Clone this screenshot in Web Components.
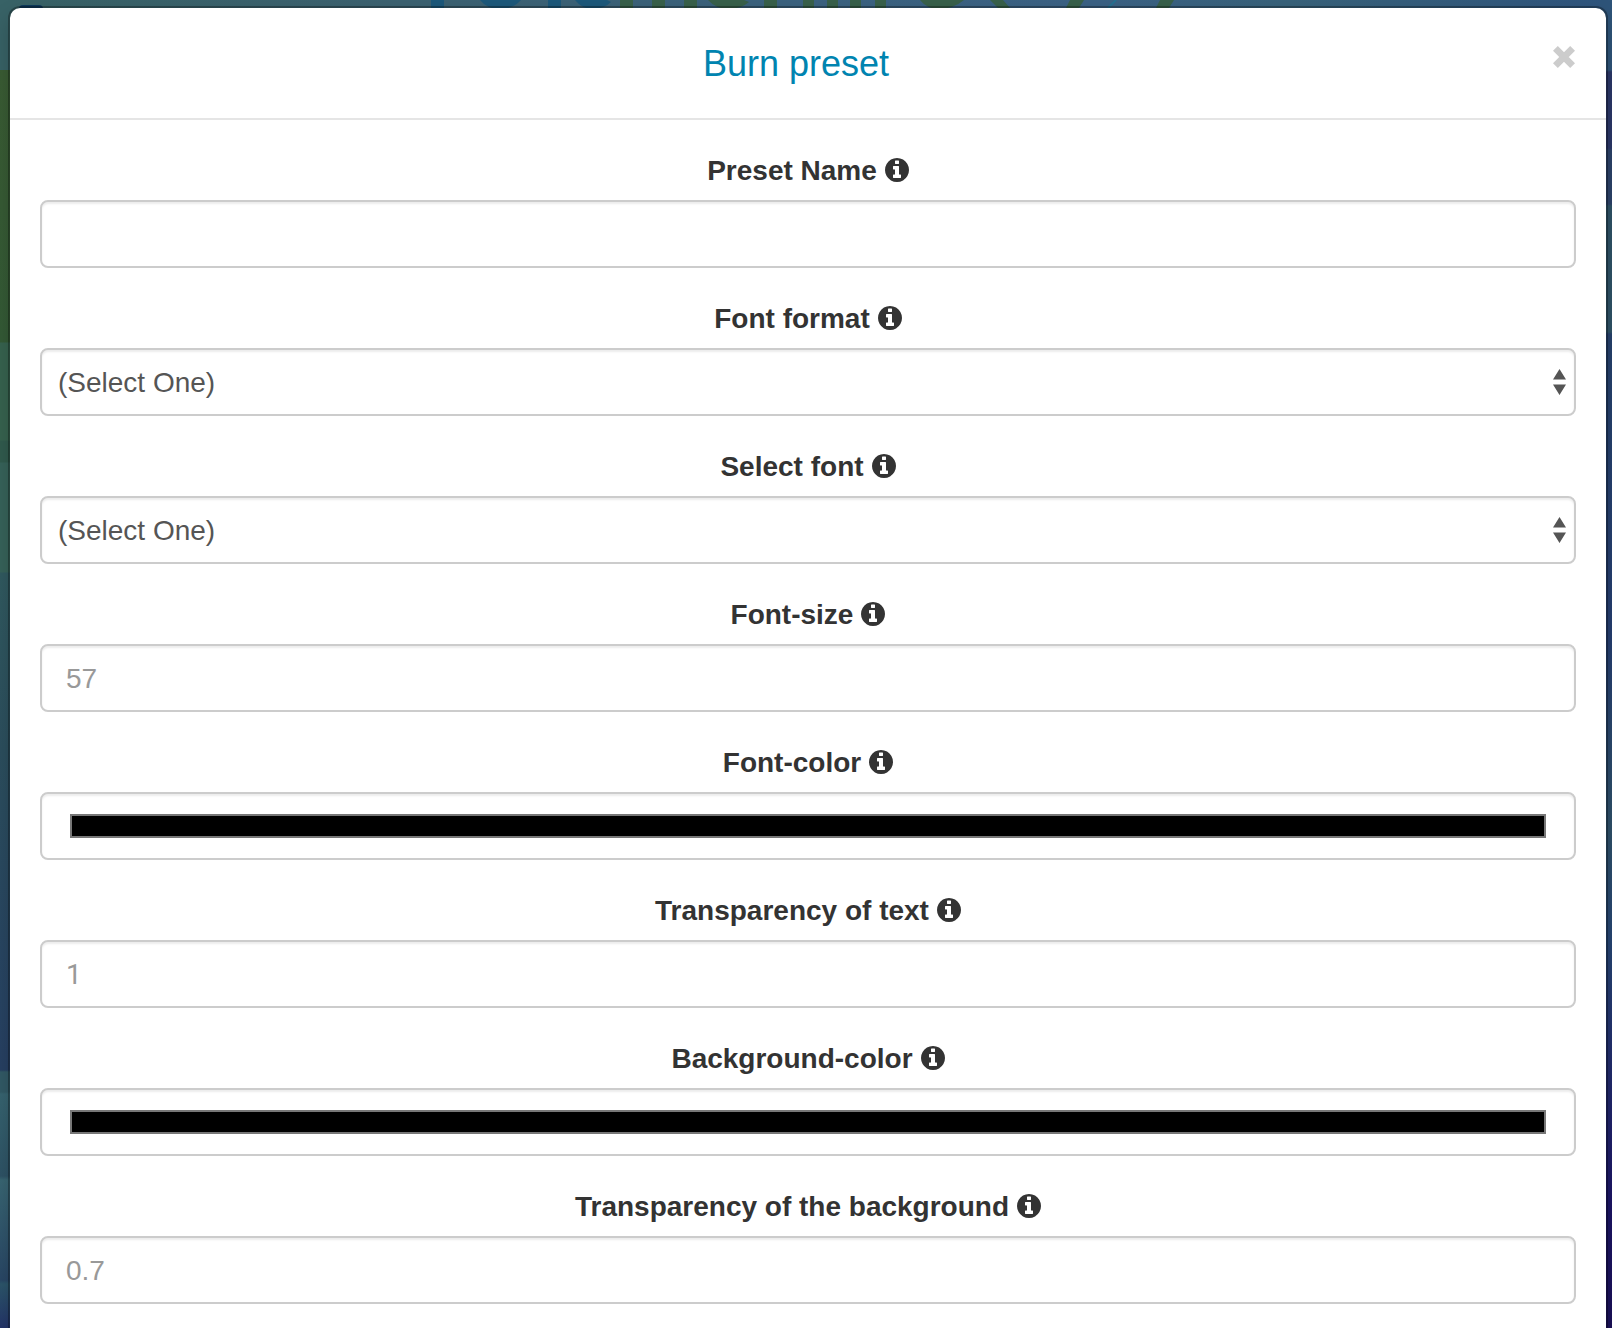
<!DOCTYPE html>
<html lang="en">
<head>
<meta charset="utf-8">
<title>Burn preset</title>
<style>
html, body { margin: 0; height: 100%; overflow: hidden; }
body { font-family: "Liberation Sans", Arial, sans-serif; font-size: 28px; color: #333; }
</style>
</head>
<body>
<page-backdrop>
  <preset-modal heading="Burn preset">
    <form-field label="Preset Name"><text-box></text-box></form-field>
    <form-field label="Font format"><select-box>(Select One)</select-box></form-field>
    <form-field label="Select font"><select-box>(Select One)</select-box></form-field>
    <form-field label="Font-size"><text-box>57</text-box></form-field>
    <form-field label="Font-color"><color-box></color-box></form-field>
    <form-field label="Transparency of text"><text-box plain-one>1</text-box></form-field>
    <form-field label="Background-color"><color-box></color-box></form-field>
    <form-field label="Transparency of the background"><text-box>0.7</text-box></form-field>
  </preset-modal>
</page-backdrop>
<script>
const define = (name, render) => customElements.define(name, class extends HTMLElement {
  constructor() { super(); this.attachShadow({ mode: 'open' }); }
  connectedCallback() { this.shadowRoot.innerHTML = render(this); }
});

define('page-backdrop', () => `
<style>
:host { display: block; box-sizing: border-box; position: relative; height: 1328px; padding: 6px 4px 0 8px; overflow: hidden;
  background:
    linear-gradient(#386266 0 70px, #3a5c34 70px, #345a36 342px, #37634f 343px 440px, #315b4e 441px 462px, #37635a 463px 572px, #315a60 573px, #2c4f5e 750px, #284463 1000px, #274063 1070px, #325a66 1072px 1092px, #376470 1094px, #2e5366 1176px, #396673 1180px, #294766 1280px, #2c566b 1284px, #24356a 1328px) 0 0 / 12px 100% no-repeat,
    linear-gradient(#2e5479 0 70px, #2b3768 72px 148px, #2c4269 150px 204px, #2e5266 206px 332px, #26416c 334px, #253e70 640px, #2e5069 830px, #264573 940px, #222d6d 1060px, #1c1566 1200px, #1a1058 1328px) 100% 0 / 12px 100% no-repeat,
    linear-gradient(90deg, #386266, #3b6170 25%, #3b627f 50%, #3a6184 68%, #38627a 80%, #2e547d); }
svg { position: absolute; left: 0; top: 0; }
</style>
<svg width="1612" height="12" aria-hidden="true">
  <rect x="19" y="5" width="24" height="12" rx="4" fill="#0d395c"/>
  <g fill="#1c587a">
    <path d="M431 0h13v8h-13z"/>
    <path d="M480 0q7 9 20 9t21-9zM548 0h13v8h-13zM575 0q7 9 18 9 11 0 18-7l-4-2z"/>
  </g>
  <g fill="#38604a">
    <path d="M620 0h13v8h-13zM652 0h13v8h-13zM684 0h13v8h-13zM708 0q8 9 21 9 12 0 20-7l-5-2zM764 0h13v8h-13zM803 0h11v8h-11zM827 0h11v8h-11zM850 0h11v8h-11zM875 0h11v8h-11zM920 0q7 9 19 9 14 0 25-9zM990 0h13l7 8h-12zM1070 0h14l-5 8h-13zM1160 0h14l-5 8h-13z"/>
  </g>
  <path d="M1116 0l-8 8" stroke="#247090" stroke-width="2"/>
</svg>
<slot></slot>`);

define('preset-modal', el => `
<style>
:host { display: block; position: relative; box-sizing: border-box; height: 1400px; background: #fff; background-clip: padding-box;
  border: 2px solid rgba(0,0,0,.3); border-radius: 12px; box-shadow: 0 10px 20px rgba(0,0,0,.18); }
header { display: flex; align-items: flex-start; box-sizing: border-box; height: 112px; padding: 30px 31px 30px 29px; border-bottom: 2px solid #e5e5e5; }
h4 { flex: 1; margin: 0; text-align: center; font-size: 36px; font-weight: 400; line-height: 51px; color: #0084b0; }
.close { width: 22px; height: 22px; margin-top: 8px; fill: none; stroke: #ccc; }
main { display: flex; flex-direction: column; gap: 30px; padding: 30px; }
</style>
<header><h4>${el.getAttribute('heading')}</h4>
<svg class="close" viewBox="0 0 22 22" aria-label="Close"><path d="M2.400 2.400 19.600 19.600M19.600 2.400 2.400 19.600" stroke-width="6.800"/></svg></header>
<main><slot></slot></main>`);

define('info-icon', () => `
<style>
:host { display: block; width: 24px; height: 24px; }
svg { display: block; }
</style>
<svg width="24" height="24" viewBox="0 128 1536 1536" fill="#333"><path d="M1024 1376v-160q0-14-9-23t-23-9h-96v-512q0-14-9-23t-23-9h-320q-14 0-23 9t-9 23v160q0 14 9 23t23 9h96v320h-96q-14 0-23 9t-9 23v160q0 14 9 23t23 9h448q14 0 23-9t9-23zm-128-896v-160q0-14-9-23t-23-9h-192q-14 0-23 9t-9 23v160q0 14 9 23t23 9h192q14 0 23-9t9-23zm640 416q0 209-103 385.500t-279.500 279.500-385.500 103-385.500-103-279.500-279.500-103-385.500 103-385.500 279.500-279.500 385.500-103 385.500 103 279.500 279.500 103 385.500z"/></svg>`);

define('form-field', el => `
<style>
:host { display: flex; flex-direction: column; gap: 10px; }
label { display: flex; justify-content: center; align-items: center; gap: 8px; height: 40px; font-weight: 700; line-height: 38px; }
span { padding-top: 2px; }
</style>
<label><span>${el.getAttribute('label')}</span><info-icon></info-icon></label>
<slot></slot>`);

const box = `:host { display: flex; align-items: center; box-sizing: border-box; height: 68px; padding: 0 24px; line-height: 38px;
  background: #fff; border: 2px solid #ccc; border-radius: 8px; box-shadow: inset 0 2px 2px rgba(0,0,0,.075); }
  span { padding-top: 2px; }`;

define('text-box', () => `<style>${box} :host { color: #999; } :host([plain-one]) { font-family: Roboto, sans-serif; }</style><span><slot></slot></span>`);

define('select-box', () => `
<style>${box} :host { color: #555; justify-content: space-between; padding: 0 8px 0 16px; }
svg { display: block; }</style>
<span><slot></slot></span>
<svg width="13" height="26" viewBox="0 0 13 26" fill="#555"><path d="M6.500 0 13 10.500H0zM0 15.500h13L6.500 26z"/></svg>`);

define('color-box', () => `
<style>${box} :host { padding: 0 28px; }
i { flex: 1; box-sizing: border-box; height: 24px; background: #000; border: 2px solid #777; }</style>
<i></i>`);
</script>
</body>
</html>
